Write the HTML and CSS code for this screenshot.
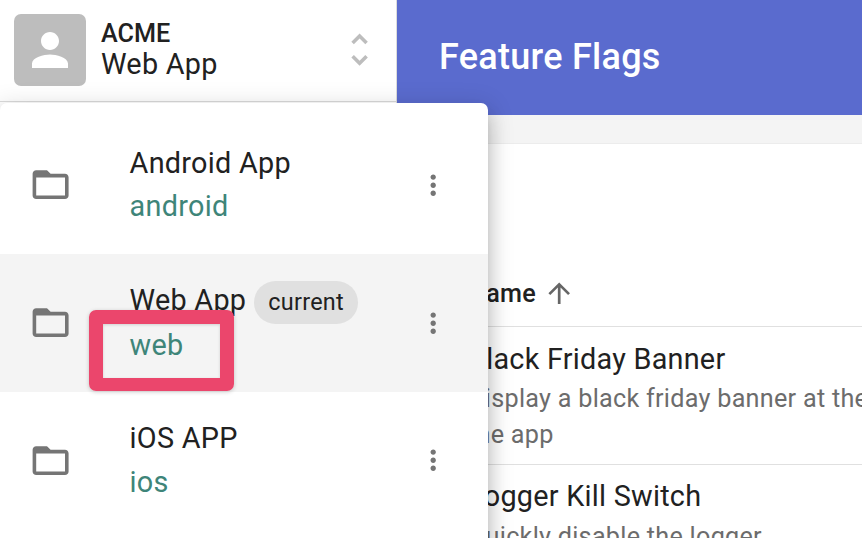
FILE: index.html
```html
<!DOCTYPE html>
<html lang="en">
<head>
<meta charset="utf-8">
<title>Feature Flags</title>
<link rel="stylesheet" href="styles.css">
</head>
<body>
<svg class="defs" aria-hidden="true">
  <symbol id="folder" viewBox="0 0 24 24"><path d="M20 6h-8l-2-2H4c-1.100 0-1.990.9-1.990 2L2 18c0 1.100.9 2 2 2h16c1.100 0 2-.9 2-2V8c0-1.100-.9-2-2-2zm0 12H4V8h16v10z"/></symbol>
  <symbol id="more" viewBox="0 0 24 24"><path d="M12 8c1.100 0 2-.9 2-2s-.9-2-2-2-2 .9-2 2 .9 2 2 2zm0 2c-1.100 0-2 .9-2 2s.9 2 2 2 2-.9 2-2-.9-2-2-2zm0 6c-1.100 0-2 .9-2 2s.9 2 2 2 2-.9 2-2-.9-2-2-2z"/></symbol>
</svg>
<div class="app">
  <aside class="sidebar">
    <div class="switcher">
      <div class="avatar"><svg viewBox="0 0 24 24"><path d="M12 12c2.210 0 4-1.790 4-4s-1.790-4-4-4-4 1.790-4 4 1.790 4 4 4zm0 2c-2.670 0-8 1.340-8 4v2h16v-2c0-2.660-5.330-4-8-4z"/></svg></div>
      <div class="names"><div class="org">ACME</div><div class="project">Web App</div></div>
      <svg class="unfold" viewBox="0 0 24 24"><path d="M12 5.830L15.170 9l1.410-1.410L12 3 7.410 7.590 8.830 9 12 5.830zm0 12.340L8.830 15l-1.410 1.410L12 21l4.590-4.590L15.170 15 12 18.170z"/></svg>
    </div>
  </aside>
  <main class="main">
    <header class="header"><h1>Feature Flags</h1></header>
    <section class="card">
      <div class="column">Name<svg viewBox="0 0 24 24"><path d="M4 12l1.410 1.410L11 7.830V20h2V7.830l5.580 5.590L20 12l-8-8-8 8z"/></svg></div>
      <div class="flag"><div class="title">Black Friday Banner</div><div class="desc">Display a black friday banner at the<br>the app</div></div>
      <div class="flag"><div class="title">Logger Kill Switch</div><div class="desc">Quickly disable the logger</div></div>
    </section>
  </main>
  <div class="menu">
    <div class="item">
      <svg class="folder"><use href="#folder"/></svg>
      <div class="label"><div class="name">Android App</div><div class="key">android</div></div>
      <svg class="more"><use href="#more"/></svg>
    </div>
    <div class="item selected">
      <svg class="folder"><use href="#folder"/></svg>
      <div class="label"><div class="name">Web App<span class="chip">current</span></div><div class="key">web</div></div>
      <svg class="more"><use href="#more"/></svg>
    </div>
    <div class="item">
      <svg class="folder"><use href="#folder"/></svg>
      <div class="label"><div class="name">iOS APP</div><div class="key">ios</div></div>
      <svg class="more"><use href="#more"/></svg>
    </div>
  </div>
  <div class="highlight"></div>
</div>
</body>
</html>
```
FILE: styles.css
```css
* { box-sizing: border-box; }
body { margin: 0; font-family: Roboto, "Liberation Sans", sans-serif; color: #212121; background: #fff; }
svg { display: block; fill: currentColor; flex: none; }
.defs { position: absolute; width: 0; height: 0; }
.app { position: relative; display: flex; width: 862px; height: 538px; overflow: hidden; }

.sidebar { width: 397px; flex: none; border-right: 1px solid #dcdcdc; }
.switcher { display: flex; align-items: center; height: 102px; padding: 0 14.400px 1px 14px; border-bottom: 1px solid #dcdcdc; }
.avatar { display: grid; place-items: center; width: 72px; height: 72px; border-radius: 7px; background: #bdbdbd; color: #fff; }
.avatar svg { width: 54px; height: 54px; }
.names { flex: 1; margin: 0 0 2px 15px; }
.org { font-size: 25.2px; font-weight: 500; line-height: 30px; }
.project { font-size: 28.8px; line-height: 30px; letter-spacing: .25px; }
.unfold { width: 43.2px; height: 43.2px; color: #bdbdbd; }

.main { flex: 1; min-width: 0; background: #f4f4f4; }
.header { display: flex; align-items: center; height: 115px; padding: 0 0 1px 42px; background: #5a6bce; color: #fff; }
h1 { margin: 0; font-size: 36px; font-weight: 500; letter-spacing: .27px; }
.card { height: 420px; margin-top: 28px; border-top: 1px solid #ececec; background: #fff; white-space: nowrap; }
.column { display: flex; align-items: center; gap: 7px; height: 183px; padding: 116px 0 0 71px; border-bottom: 1px solid #e0e0e0; font-size: 25.2px; font-weight: 500; letter-spacing: .27px; }
.column svg { width: 32.4px; height: 32.4px; color: #666; }
.flag { height: 138px; padding: 11px 0 0 71px; border-bottom: 1px solid #e0e0e0; }
.flag + .flag { padding-top: 10px; }
.flag + .flag .desc { padding-top: 1px; }
.title { font-size: 28.8px; line-height: 43px; letter-spacing: .25px; }
.desc { font-size: 25.2px; line-height: 36px; letter-spacing: .27px; color: #6c6c6c; }

.menu { position: absolute; top: 103px; left: 0; width: 488px; height: 460px; padding-top: 13px; border-radius: 7px; background: #fff; box-shadow: 0 9px 10px -5px rgba(0,0,0,.2), 0 14px 18px 2px rgba(0,0,0,.14), 0 5px 25px 4px rgba(0,0,0,.12); }
.item { display: flex; align-items: center; height: 138px; padding: 0 38.400px 0 28.8px; }
.item:last-child { height: 137px; }
.selected { background: #f4f4f4; }
.folder { width: 43.2px; height: 43.2px; color: #757575; }
.more { width: 32.4px; height: 32.4px; color: #757575; }
.label { flex: 1; margin-left: 57.600px; font-size: 28.8px; line-height: 43.2px; letter-spacing: .27px; }
.name { display: flex; }
.selected .label { padding-top: 1px; }
.selected .name { height: 45px; }
.item:last-child .name { height: 44px; }
.key { color: #3e8579; }
.chip { height: 43px; margin: 2px 0 0 8px; padding: 0 14px; border-radius: 22px; background: #e0e0e0; font-size: 23.4px; line-height: 42px; }
.highlight { position: absolute; left: 89px; top: 309.500px; width: 145px; height: 81px; border: 14px solid #eb466c; border-bottom-width: 13.500px; border-radius: 7px; box-shadow: 0 1px 4px rgba(0,0,0,.2), inset 0 1px 3px rgba(0,0,0,.15); }
```
